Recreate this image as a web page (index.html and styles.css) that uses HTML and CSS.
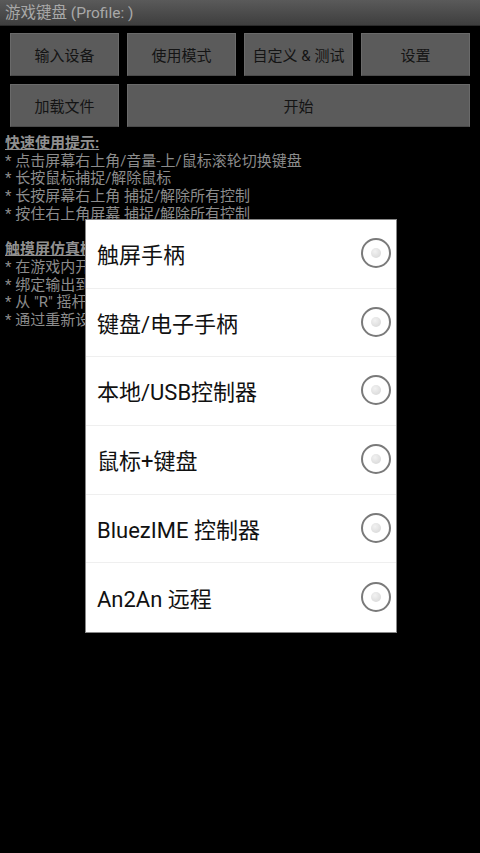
FILE: index.html
```html
<!DOCTYPE html>
<html lang="zh-CN">
<head>
<meta charset="utf-8">
<title>游戏键盘</title>
<link rel="stylesheet" href="styles.css">
</head>
<body>
<div class="app">
  <div class="titlebar">游戏键盘 (Profile: )</div>
  <div class="buttons">
    <div class="btn">输入设备</div>
    <div class="btn">使用模式</div>
    <div class="btn">自定义 &amp; 测试</div>
    <div class="btn">设置</div>
    <div class="btn">加载文件</div>
    <div class="btn wide">开始</div>
  </div>
  <div class="tips">
    <div class="head">快速使用提示:</div>
    <div>* 点击屏幕右上角/音量-上/鼠标滚轮切换键盘</div>
    <div>* 长按鼠标捕捉/解除鼠标</div>
    <div>* 长按屏幕右上角 捕捉/解除所有控制</div>
    <div>* 按住右上角屏幕 捕捉/解除所有控制</div>
    <div class="blank">&nbsp;</div>
    <div class="clip head">触摸屏仿真模式提示:</div>
    <div class="clip">* 在游戏内开启触摸屏仿真</div>
    <div class="clip">* 绑定输出到触摸屏位置</div>
    <div class="clip">* 从 "R" 摇杆拖动视角</div>
    <div class="clip">* 通过重新设置调整位置</div>
  </div>
</div>

<div class="dialog">
  <div class="item"><span>触屏手柄</span><i class="radio"></i></div>
  <div class="item"><span>键盘/电子手柄</span><i class="radio"></i></div>
  <div class="item"><span>本地/USB控制器</span><i class="radio"></i></div>
  <div class="item"><span>鼠标+键盘</span><i class="radio"></i></div>
  <div class="item"><span>BluezIME 控制器</span><i class="radio"></i></div>
  <div class="item last"><span>An2An 远程</span><i class="radio"></i></div>
</div>
</body>
</html>
```

FILE: styles.css
```css
html, body {
  margin: 0;
  padding: 0;
  background: #000;
  width: 480px;
  height: 853px;
  overflow: hidden;
  font-family: Roboto, "Noto Sans CJK SC", sans-serif;
}

.app {
  display: flex;
  flex-direction: column;
}

.titlebar {
  height: 26px;
  line-height: 26px;
  padding-left: 5px;
  font-size: 15.5px;
  color: #a8a8a8;
  background: linear-gradient(#5a5a5a, #3e3e3e);
  border-bottom: 1px solid #2a2a2a;
  box-sizing: border-box;
}

.buttons {
  display: grid;
  grid-template-columns: repeat(4, 1fr);
  column-gap: 8px;
  row-gap: 8px;
  padding: 7px 10px 0 10px;
}

.btn {
  height: 43px;
  box-sizing: border-box;
  background: #5b5b5b;
  border: 1px solid #6a6a6a;
  border-bottom-color: #4a4a4a;
  display: flex;
  align-items: center;
  justify-content: center;
  font-size: 15px;
  color: #141414;
}

.btn.wide {
  grid-column: span 3;
}

.tips {
  padding: 8px 0 0 5px;
  font-size: 15px;
  line-height: 17.7px;
  color: #8c8c8c;
  white-space: nowrap;
}

.tips .head {
  text-decoration: underline;
  font-weight: bold;
  color: #909090;
}

.tips .clip {
  width: 80px;
  overflow: hidden;
}

.dialog {
  position: absolute;
  left: 85px;
  top: 219px;
  width: 312px;
  background: #fff;
  border: 1px solid #888;
  box-sizing: border-box;
  display: flex;
  flex-direction: column;
}

.item {
  height: 68.7px;
  display: flex;
  align-items: center;
  justify-content: space-between;
  padding: 0 5px 2px 11px;
  border-bottom: 1px solid #efefef;
  box-sizing: border-box;
  font-size: 22px;
  color: #111;
}

.item.last {
  border-bottom: none;
}

.radio {
  display: block;
  width: 30px;
  height: 30px;
  border: 2px solid #7a7a7a;
  border-radius: 50%;
  box-sizing: border-box;
  position: relative;
  background: #fff;
}

.radio::after {
  content: "";
  position: absolute;
  left: 8px;
  top: 8px;
  width: 10px;
  height: 10px;
  border-radius: 50%;
  background: radial-gradient(circle at 40% 35%, #f2f2f2, #d4d4d4);
}
```
